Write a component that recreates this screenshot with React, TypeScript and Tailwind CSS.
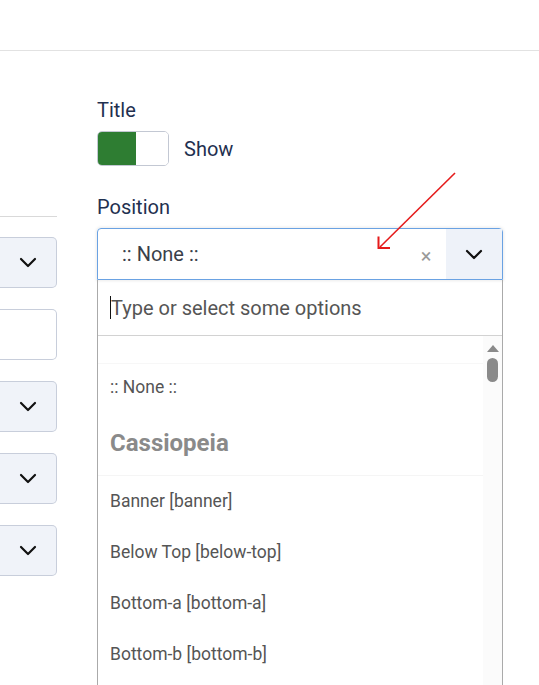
import React from "react";

const Chevron = ({ className = "" }: { className?: string }) => (
  <svg width="18" height="11" viewBox="0 0 18 11" className={className} fill="none">
    <path d="M2 2 L9 9 L16 2" stroke="#111" strokeWidth="2.2" strokeLinecap="round" strokeLinejoin="round" />
  </svg>
);

const LeftSelect = () => (
  <div className="h-[51px] w-[57px] rounded-r-[5px] border border-l-0 border-[#c8cedb] bg-[#f0f3f9] flex items-center justify-end pr-[19px]">
    <Chevron />
  </div>
);

const items = ["Banner [banner]", "Below Top [below-top]", "Bottom-a [bottom-a]", "Bottom-b [bottom-b]"];

export default function App() {
  return (
    <div
      className="relative w-[539px] h-[685px] overflow-hidden bg-white"
      style={{ fontFamily: "Roboto, 'Noto Sans', sans-serif" }}
    >
      <div className="h-[51px] border-b border-[#e2e2e2]" />
      <div className="flex gap-[40px]">
        <div className="w-[57px] flex flex-col">
          <div className="h-[166px] border-b border-[#d9d9d9]" />
          <div className="mt-[20px] flex flex-col gap-[21px]">
            <LeftSelect />
            <div className="h-[51px] w-[57px] rounded-r-[5px] border border-l-0 border-[#c8cedb] bg-white" />
            <LeftSelect />
            <LeftSelect />
            <LeftSelect />
          </div>
        </div>
        <div className="w-[406px] flex flex-col">
          <div className="mt-[47px] text-[20px] leading-[24px] text-[#1f3050]">Title</div>
          <div className="mt-[9px] flex items-center">
            <div className="h-[35px] w-[72px] rounded-[5px] border border-[#c3c8d3] flex overflow-hidden">
              <div className="w-[38px] bg-[#2e7d32]" />
              <div className="flex-1 bg-white" />
            </div>
            <span className="ml-[15px] text-[20px] text-[#1f3050]">Show</span>
          </div>
          <div className="mt-[29px] text-[20px] leading-[24px] text-[#1f3050]">Position</div>
          <div className="mt-[9px] h-[52px] rounded-t-[4px] border border-[#6aa2e3] shadow-[0_0_3px_1px_rgba(0,0,0,0.08)] flex">
            <div className="flex-1 flex items-center pl-[24px] text-[20px] text-[#3a3f4a]">:: None ::</div>
            <div className="w-[40px] flex items-center justify-center pt-[4px] text-[20px] text-[#9a9a9a]">×</div>
            <div className="w-[56px] bg-[#eef2f9] flex items-center justify-center">
              <Chevron />
            </div>
          </div>
          <div className="border-x border-[#aaaaaa] flex flex-col h-[406px]">
            <div className="h-[56px] shrink-0 border-b border-[#d2d2d2] flex items-center pl-[12px]">
              <span className="w-[1px] h-[23px] bg-[#111]" />
              <span className="text-[20px] text-[#555]">Type or select some options</span>
            </div>
            <div className="flex flex-1">
              <div className="flex-1 flex flex-col pt-[27px]">
                <div className="h-[46px] flex items-center pt-[2px] pl-[12px] text-[17.5px] text-[#555] border-t border-[#f7f7f7]">:: None ::</div>
                <div className="h-[67px] flex items-center pt-[1px] pl-[12px] text-[24px] font-bold text-[#8a8a8a] border-b border-[#f5f5f5]">Cassiopeia</div>
                {items.map((t) => (
                  <div key={t} className="h-[51px] flex items-center pl-[12px] text-[17.5px] text-[#555]">
                    {t}
                  </div>
                ))}
              </div>
              <div className="w-[19px] bg-[#fbfbfb] flex flex-col items-center pt-[9px]">
                <div className="w-0 h-0 border-x-[6px] border-x-transparent border-b-[7px] border-b-[#8a8a8a]" />
                <div className="mt-[6px] w-[11px] h-[24px] rounded-full bg-[#8a8a8a]" />
              </div>
            </div>
          </div>
        </div>
      </div>
      <svg className="absolute left-0 top-0" width="539" height="685" viewBox="0 0 539 685" fill="none">
        <path d="M455 173 L380 247" stroke="#e51b1b" strokeWidth="1.6" />
        <path d="M378.5 236.5 L378.5 248 L390 248" stroke="#e51b1b" strokeWidth="2" strokeLinejoin="miter" />
      </svg>
    </div>
  );
}
